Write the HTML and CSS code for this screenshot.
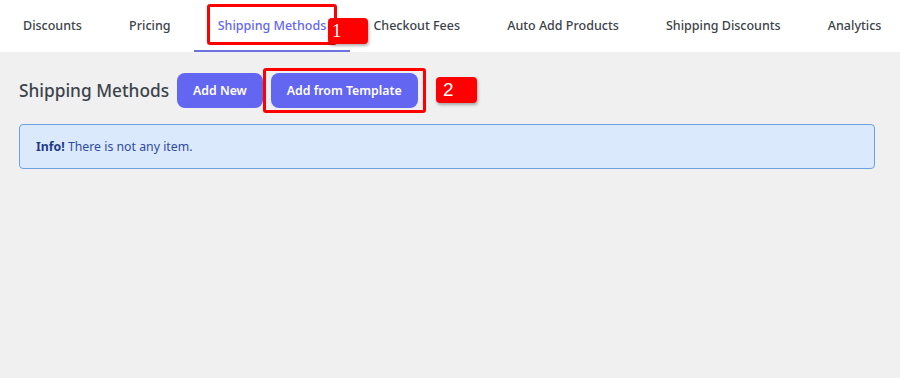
FILE: index.html
```html
<!DOCTYPE html>
<html>
<head>
<meta charset="utf-8">
<link rel="stylesheet" href="styles.css">
</head>
<body>
<nav class="tabs">
  <div class="tab">Discounts</div>
  <div class="tab">Pricing</div>
  <div class="tab active">Shipping Methods
    <span class="mark mark-1"></span>
    <span class="badge badge-1">1</span>
  </div>
  <div class="tab">Checkout Fees</div>
  <div class="tab">Auto Add Products</div>
  <div class="tab">Shipping Discounts</div>
  <div class="tab">Analytics</div>
</nav>
<main class="content">
  <div class="toolbar">
    <h1 class="title">Shipping Methods</h1>
    <button class="btn">Add New</button>
    <div class="tpl-wrap">
      <button class="btn">Add from Template</button>
      <span class="mark mark-2"></span>
    </div>
    <span class="badge badge-2">2</span>
  </div>
  <div class="info"><strong>Info!</strong> There is not any item.</div>
</main>
</body>
</html>
```
FILE: styles.css
```css
html, body {
  margin: 0;
  padding: 0;
}
body {
  background: #f0f0f1;
  font-family: "Noto Sans", "Open Sans", sans-serif;
  width: 900px;
  height: 378px;
  overflow: hidden;
}
.tabs {
  display: flex;
  background: #ffffff;
  height: 52px;
  box-sizing: border-box;
}
.tab {
  position: relative;
  padding: 0 23.6px;
  font-size: 12.5px;
  font-weight: 500;
  color: #3c434a;
  line-height: 51px;
  height: 50px;
  border-bottom: 2px solid transparent;
  white-space: nowrap;
}
.tab:first-child {
  padding-left: 23px;
}
.tab.active {
  color: #6366f1;
  border-bottom-color: #7071e0;
}
.mark {
  position: absolute;
  border: 3px solid #ff0000;
  border-radius: 3px;
  pointer-events: none;
}
.mark-1 {
  left: 13px;
  top: 4px;
  width: 124px;
  height: 35px;
}
.badge {
  position: absolute;
  background: #ff0000;
  color: #ffffff;
  font-family: "Liberation Serif", "DejaVu Serif", serif;
  font-size: 19px;
  line-height: 26px;
  border-radius: 4px;
  box-shadow: 1px 2px 3px rgba(0,0,0,0.3);
  box-sizing: border-box;
  padding-left: 4px;
  height: 26px;
}
.badge-1 {
  left: 134px;
  top: 18px;
  width: 40px;
  text-align: left;
}
.content {
  padding: 21px 25px 0 19px;
}
.toolbar {
  position: relative;
  display: flex;
  align-items: center;
  gap: 8px;
  height: 35px;
}
.title {
  margin: 0;
  font-size: 17.3px;
  font-weight: 500;
  color: #3c434a;
}
.btn {
  background: #6366f1;
  color: #ffffff;
  border: none;
  border-radius: 8px;
  height: 35px;
  padding: 0 16px;
  font-family: "Noto Sans", "Open Sans", sans-serif;
  font-size: 12.3px;
  font-weight: 600;
}
.tpl-wrap {
  position: relative;
}
.mark-2 {
  left: -8px;
  top: -5px;
  width: 157px;
  height: 39px;
}
.badge-2 {
  left: 417px;
  top: 4px;
  width: 41px;
  padding-left: 7px;
  font-family: "Liberation Sans", sans-serif;
  font-size: 19px;
}
.info {
  margin-top: 16px;
  height: 45px;
  box-sizing: border-box;
  background: #dbe9fd;
  border: 1px solid #6fa0e0;
  border-radius: 4px;
  padding: 0 16px;
  line-height: 43px;
  font-size: 12.3px;
  color: #2f4aa0;
}
.info strong {
  color: #1e3a8a;
  font-weight: 700;
}
```
